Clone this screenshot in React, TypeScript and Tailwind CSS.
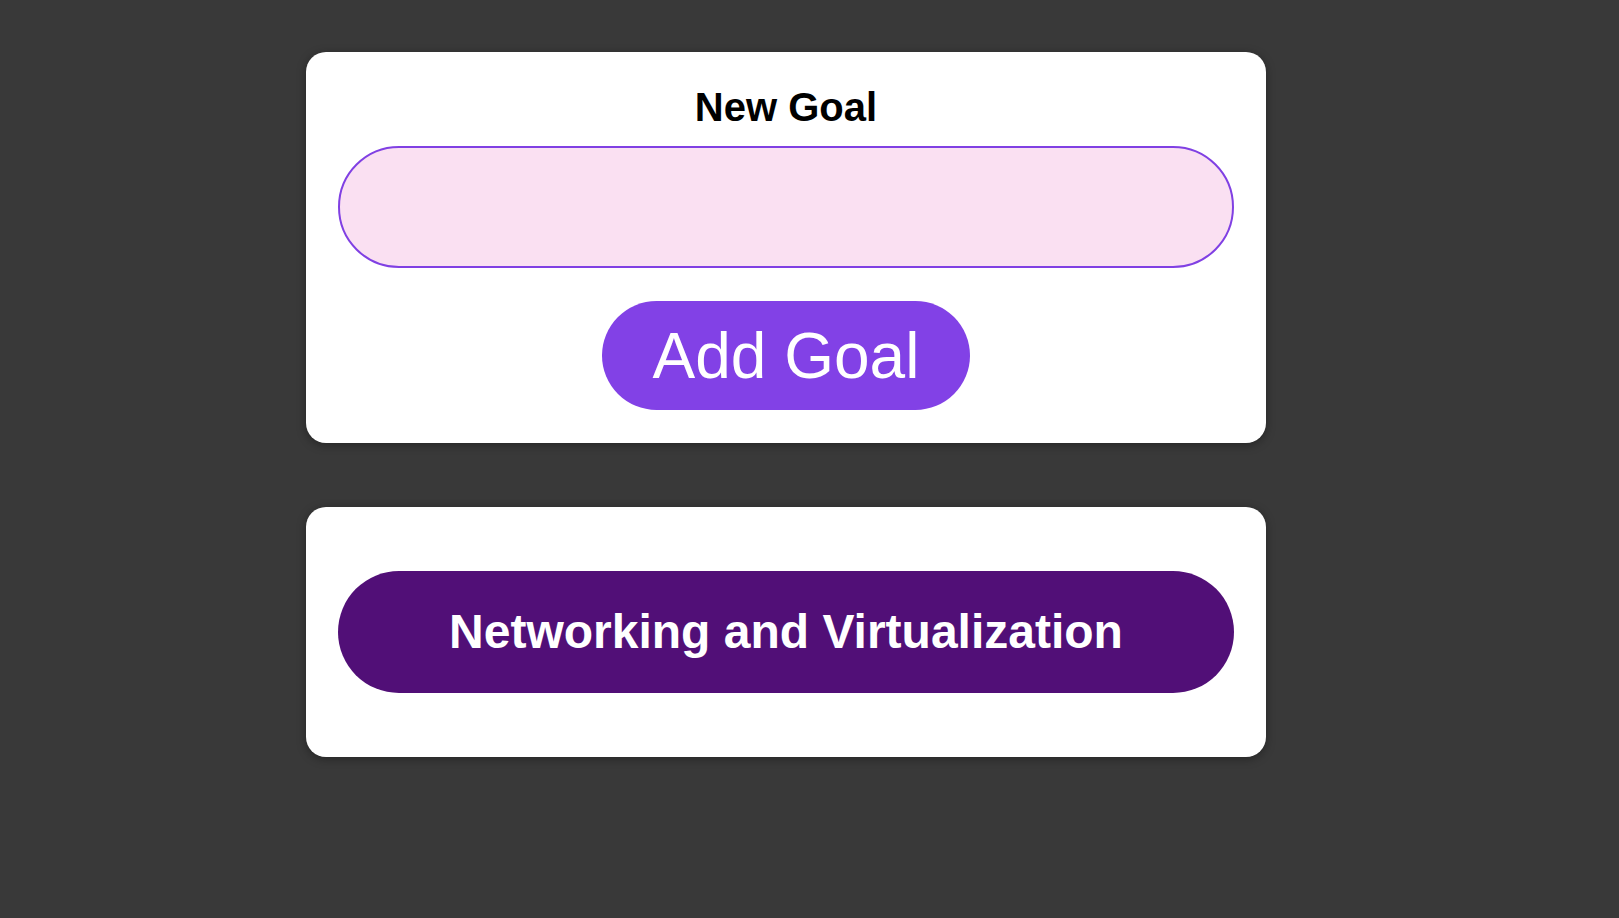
import { useState } from "react";

const App = () => {
  const [goal, setGoal] = useState("");
  const [goals, setGoals] = useState<string[]>(["Networking and Virtualization"]);

  const addGoal = () => {
    if (!goal.trim()) return;
    setGoals([...goals, goal.trim()]);
    setGoal("");
  };

  return (
    <div
      className="min-h-screen w-full bg-[#393939] pt-[52px] pl-[306px]"
      style={{ fontFamily: '"Liberation Sans", Arial, Helvetica, sans-serif' }}
    >
      <div className="w-[960px] flex flex-col gap-[64px]">
        <section className="bg-white rounded-[20px] shadow-[0_2px_10px_rgba(0,0,0,0.35)] px-[32px] pt-[32px] pb-[33px] flex flex-col items-center">
          <h2 className="text-[40px] leading-[46px] font-bold text-black">New Goal</h2>
          <input
            value={goal}
            onChange={(e) => setGoal(e.target.value)}
            className="mt-[16px] w-full h-[122px] rounded-full bg-[#fae0f2] border-2 border-[#8040e3] px-[60px] text-[40px] outline-none"
          />
          <button
            onClick={addGoal}
            className="mt-[33px] h-[109px] px-[51px] rounded-full bg-[#8241e6] text-white text-[64px] leading-[74px] flex items-center justify-center"
          >
            Add Goal
          </button>
        </section>

        <section className="bg-white rounded-[20px] shadow-[0_2px_10px_rgba(0,0,0,0.35)] p-[32px] flex flex-col gap-[32px]">
          {goals.map((g) => (
            <div
              key={g}
              className="my-[32px] w-full h-[122px] rounded-full bg-[#510f77] text-white text-[48px] font-bold flex items-center justify-center"
            >
              {g}
            </div>
          ))}
        </section>
      </div>
    </div>
  );
};

export default App;
